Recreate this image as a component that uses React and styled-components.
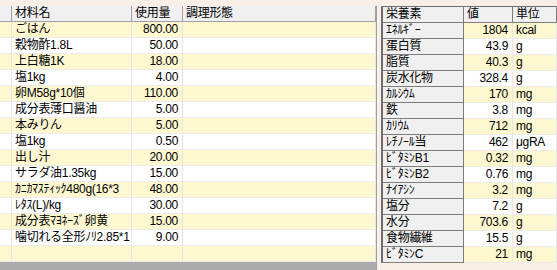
import React from "react"
import styled, { createGlobalStyle } from "styled-components"

const GlobalStyle = createGlobalStyle`
    html, body {
        margin: 0;
        height: 100%;
        overflow: hidden;
        background: #f8f0e7;
    }
    #root {
        height: 100%;
    }
`

const ingredients = [
    { name: "ごはん", qty: "800.00" },
    { name: "穀物酢1.8L", qty: "50.00" },
    { name: "上白糖1K", qty: "18.00" },
    { name: "塩1kg", qty: "4.00" },
    { name: "卵M58g*10個", qty: "110.00" },
    { name: "成分表薄口醤油", qty: "5.00" },
    { name: "本みりん", qty: "5.00" },
    { name: "塩1kg", qty: "0.50" },
    { name: "出し汁", qty: "20.00" },
    { name: "サラダ油1.35kg", qty: "15.00" },
    { name: "ｶﾆｶﾏｽﾃｨｯｸ480g(16*3", qty: "48.00" },
    { name: "ﾚﾀｽ(L)/kg", qty: "30.00" },
    { name: "成分表ﾏﾖﾈｰｽﾞ卵黄", qty: "15.00" },
    { name: "噛切れる全形ﾉﾘ2.85*1", qty: "9.00" },
    { name: "", qty: "" },
]

const nutrients = [
    { name: "ｴﾈﾙｷﾞｰ", value: "1804", unit: "kcal" },
    { name: "蛋白質", value: "43.9", unit: "g" },
    { name: "脂質", value: "40.3", unit: "g" },
    { name: "炭水化物", value: "328.4", unit: "g" },
    { name: "ｶﾙｼｳﾑ", value: "170", unit: "mg" },
    { name: "鉄", value: "3.8", unit: "mg" },
    { name: "ｶﾘｳﾑ", value: "712", unit: "mg" },
    { name: "ﾚﾁﾉｰﾙ当", value: "462", unit: "μgRA" },
    { name: "ﾋﾞﾀﾐﾝB1", value: "0.32", unit: "mg" },
    { name: "ﾋﾞﾀﾐﾝB2", value: "0.76", unit: "mg" },
    { name: "ﾅｲｱｼﾝ", value: "3.2", unit: "mg" },
    { name: "塩分", value: "7.2", unit: "g" },
    { name: "水分", value: "703.6", unit: "g" },
    { name: "食物繊維", value: "15.5", unit: "g" },
    { name: "ﾋﾞﾀﾐﾝC", value: "21", unit: "mg" },
]

const Page = styled.div`
    display: flex;
    flex-direction: row;
    align-items: flex-start;
    height: 100%;
    padding-top: 6px;
    box-sizing: border-box;
    font-family: "Liberation Sans", "Noto Sans CJK JP", sans-serif;
    font-size: 12px;
    letter-spacing: -0.3px;
    color: #000;
`

const LeftGrid = styled.div`
    width: 377px;
    height: 100%;
    background: #ababab;
    border-right: 1px solid #a0a0a0;
    box-sizing: border-box;
    display: flex;
    flex-direction: column;
`

const LeftRow = styled.div`
    display: grid;
    grid-template-columns: 12px 120px 51px 1fr;
    height: 16px;
    background: ${(p) => (p.$head ? "#f0f0f0" : p.$odd ? "#fef8d1" : "#ffffff")};
`

const Cell = styled.div`
    box-sizing: border-box;
    border-right: 1px solid ${(p) => (p.$head ? "#a0a0a0" : "#e6e6e6")};
    border-bottom: 1px solid ${(p) => (p.$head ? "#a0a0a0" : "#ececec")};
    padding: 0 ${(p) => (p.$right ? "4px" : "3px")};
    text-align: ${(p) => (p.$right ? "right" : "left")};
    line-height: 15px;
    white-space: nowrap;
    overflow: hidden;
`

const RightGrid = styled.div`
    margin-left: 4px;
    flex: 1;
    border-top: 1px solid #6e6e6e;
    border-left: 2px solid #6e6e6e;
    box-sizing: border-box;
    display: flex;
    flex-direction: column;
`

const RightRow = styled.div`
    display: grid;
    grid-template-columns: 81px 49px 1fr;
    height: 16px;
    background: ${(p) => (p.$odd ? "#fef8d1" : "#ffffff")};
`

const FixedCell = styled.div`
    box-sizing: border-box;
    background: #f0f0f0;
    border-right: 1px solid #7c7c7c;
    border-bottom: 1px solid #7c7c7c;
    padding: 0 3px;
    line-height: 15px;
    white-space: nowrap;
    overflow: hidden;
`

const IngredientRow = ({ item, index }) => (
    <LeftRow $odd={index % 2 === 0}>
        <Cell />
        <Cell>{item.name}</Cell>
        <Cell $right>{item.qty}</Cell>
        <Cell />
    </LeftRow>
)

const NutrientRow = ({ item, index }) => (
    <RightRow $odd={index % 2 === 0}>
        <FixedCell>{item.name}</FixedCell>
        <Cell $right>{item.value}</Cell>
        <Cell>{item.unit}</Cell>
    </RightRow>
)

const App = () => {
    return (
        <>
            <GlobalStyle />
            <Page>
                <LeftGrid>
                    <LeftRow $head>
                        <Cell $head />
                        <Cell $head>材料名</Cell>
                        <Cell $head>使用量</Cell>
                        <Cell $head>調理形態</Cell>
                    </LeftRow>
                    {ingredients.map((item, i) => (
                        <IngredientRow key={i} item={item} index={i} />
                    ))}
                </LeftGrid>
                <RightGrid>
                    <RightRow>
                        <FixedCell>栄養素</FixedCell>
                        <FixedCell>値</FixedCell>
                        <FixedCell>単位</FixedCell>
                    </RightRow>
                    {nutrients.map((item, i) => (
                        <NutrientRow key={i} item={item} index={i} />
                    ))}
                </RightGrid>
            </Page>
        </>
    )
}

export default App
